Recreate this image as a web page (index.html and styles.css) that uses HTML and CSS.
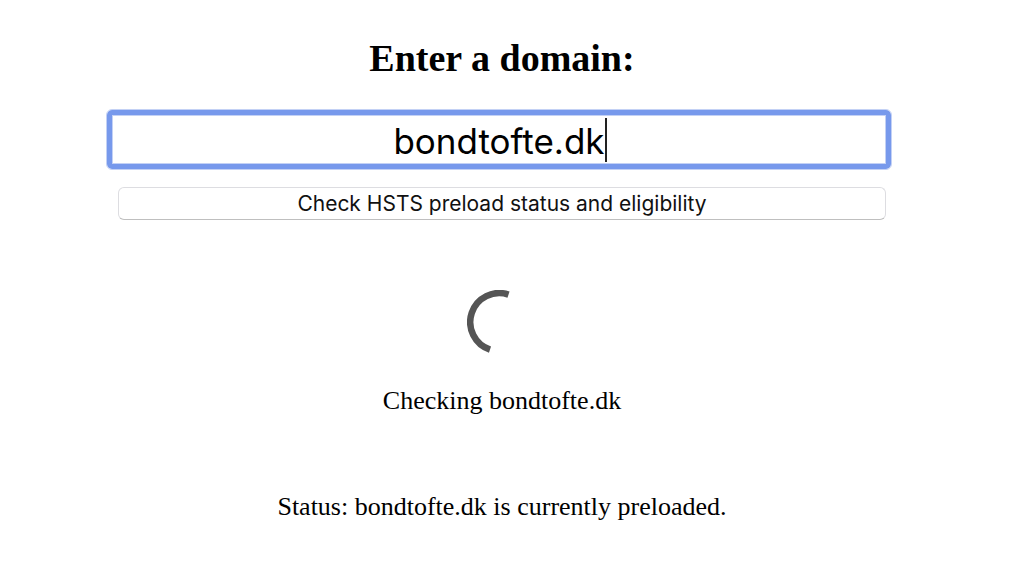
FILE: index.html
```html
<!DOCTYPE html>
<html lang="en">

<head>
    <meta charset="UTF-8" />
    <meta name="viewport" content="width=device-width, initial-scale=1.0" />
    <title>HSTS Preload List</title>
    <link rel="stylesheet" href="styles.css">
</head>

<body>

    <main class="container">
        <form class="domain-form">
            <h2 class="form-title"><label for="domain">Enter a domain:</label></h2>
            <div class="input-wrapper">
                <input type="text" id="domain" class="domain-input" value="bondtofte.dk" autocomplete="off" spellcheck="false" />
                <span class="caret" aria-hidden="true"></span>
            </div>
            <button type="button" class="check-btn">Check HSTS preload status and eligibility</button>
        </form>

        <svg class="spinner" viewBox="0 0 64 64" aria-hidden="true">
            <path d="M41.5 4.6 A29 29 0 0 0 23 59.6" fill="none" stroke="#555" stroke-width="6.5" />
        </svg>

        <p class="message">Checking bondtofte.dk</p>
        <p class="message status">Status: bondtofte.dk is currently preloaded.</p>
    </main>

</body>

</html>
```

FILE: styles.css
```css
* {
    box-sizing: border-box;
}

body {
    margin: 0;
    padding: 34px 20px 34px 0;
    background: #fff;
    color: #000;
    font-family: "Liberation Serif", "Times New Roman", serif;
}

.container {
    display: flex;
    flex-direction: column;
    align-items: center;
    width: 76.5%;
    margin: 0 auto;
}

.domain-form {
    display: flex;
    flex-direction: column;
    width: 100%;
}

.form-title {
    margin: 0 0 27px;
    font-size: 38px;
    line-height: 48px;
    text-align: center;
}

.input-wrapper {
    position: relative;
    margin: 0 -6px 0 -12px;
}

.domain-input {
    display: block;
    width: 100%;
    height: 61px;
    padding: 2px 0 0;
    border: 1px solid #c3d1f5;
    border-radius: 6px;
    outline: none;
    background: #fff;
    box-shadow: inset 0 0 0 5px #7799ec, inset 0 0 0 6px #c3d1f5;
    color: #000;
    font-family: Inter, "Liberation Sans", sans-serif;
    font-size: 35px;
    text-align: center;
}

/* text cursor after the value */
.caret {
    position: absolute;
    top: 9px;
    left: calc(50% + 106px);
    width: 2px;
    height: 44px;
    background: #222;
}

.check-btn {
    width: 100%;
    height: 33px;
    margin-top: 17px;
    padding: 0;
    border: 1px solid #dddde1;
    border-bottom-color: #bfbfbf;
    border-radius: 6px;
    background: #fff;
    color: #111;
    font-family: Inter, "Liberation Sans", sans-serif;
    font-size: 21px;
    line-height: 30px;
}

.spinner {
    width: 64px;
    height: 64px;
    margin: 70px 6px 0 0;
}

.message {
    margin: 32px 0 0;
    font-size: 26px;
    line-height: 30px;
    text-align: center;
}

.status {
    margin-top: 76px;
}
```
